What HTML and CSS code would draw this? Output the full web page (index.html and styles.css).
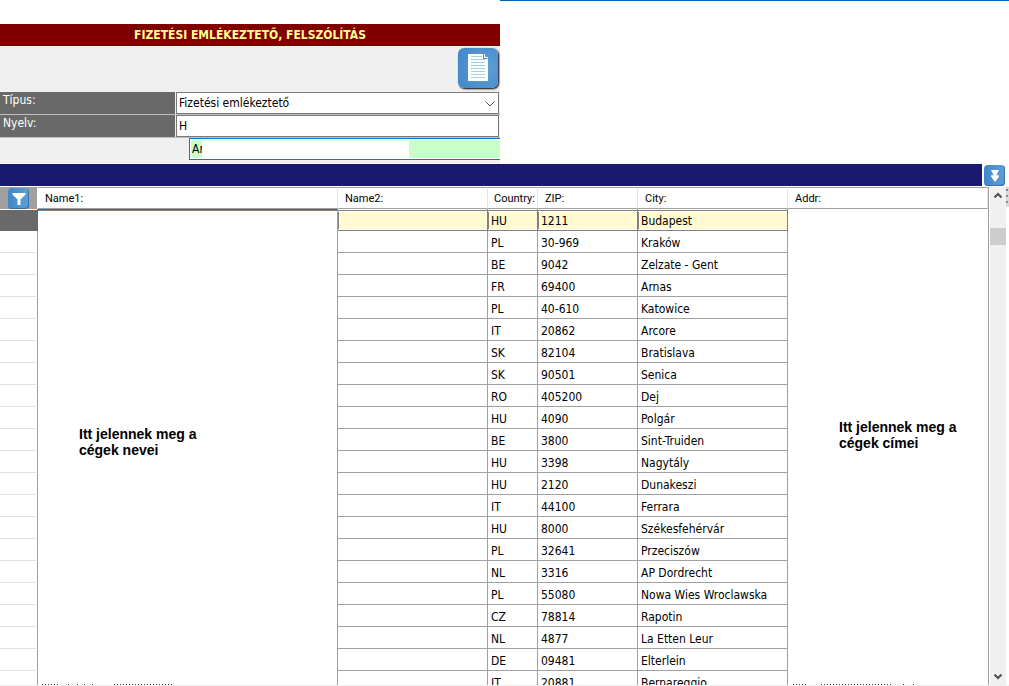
FILE: index.html
```html
<!DOCTYPE html>
<html lang="hu">
<head>
<meta charset="utf-8">
<title>Fizetési emlékeztető, felszólítás</title>
<link rel="stylesheet" href="styles.css">
</head>
<body>
<div class="top-area">
  <form class="panel">
    <h1 class="panel-title">FIZETÉSI EMLÉKEZTETŐ, FELSZÓLÍTÁS</h1>
    <div class="toolbar">
      <button class="doc-button" type="button" aria-label="Dokumentum">
        <svg width="20" height="28" viewBox="0 0 20 28"><path d="M0 0h15l5 5v22H0z" fill="#fbfdff"/><path d="M15 0v5h5z" fill="#3f86c6"/><path d="M16 0h1v3h3v1h-4z" fill="#fff"/><path d="M3 2.500h11M3 5.500h14M3 8.500h14M3 11.500h14M3 14.500h14M3 17.500h14M3 20.500h14M3 23.500h14" stroke="#a5cdec"/></svg>
      </button>
    </div>
    <div class="field">
      <label class="field-label" for="type">Típus:</label>
      <span class="field-box">
        <select class="control" id="type"><option>Fizetési emlékeztető</option></select>
        <svg class="chevron" width="10" height="6" viewBox="0 0 10 6"><path d="M.5.5 5 5 9.500.5" fill="none" stroke="#555"/></svg>
      </span>
    </div>
    <div class="field">
      <label class="field-label" for="lang">Nyelv:</label>
      <span class="field-box"><input class="control" id="lang" value="H"></span>
    </div>
    <div class="search">
      <input class="search-input" value="Ar" aria-label="Keresés">
      <span class="search-mask"></span>
    </div>
  </form>
  <div class="top-line"></div>
</div>
<div class="bar">
  <div class="bar-fill"></div>
  <button class="small-button" type="button" aria-label="Lenyitás">
    <svg width="10" height="14" viewBox="0 0 10 14"><path d="M1 1h8L6.500 6H9v1.500L5 13 1 7.500V6h2.500z" fill="#fff"/><path d="M1 6.500h2.500M6.500 6.500H9" stroke="#cfe2f4"/></svg>
  </button>
</div>
<main class="grid-area">
  <div class="table-wrap">
    <table class="grid">
      <colgroup><col class="c-mark"><col class="c-name1"><col class="c-name2"><col class="c-country"><col class="c-zip"><col class="c-city"><col></colgroup>
      <thead>
        <tr>
          <th class="corner"><button class="small-button" type="button" aria-label="Szűrő"><svg width="14" height="14" viewBox="0 0 14 14"><path d="M.5 1h13v1.500L8.500 7.500V13H5.500V7.500L.5 2.500z" fill="#fff"/></svg></button></th>
          <th>Name1:</th><th>Name2:</th><th>Country:</th><th>ZIP:</th><th>City:</th><th>Addr:</th>
        </tr>
      </thead>
      <tbody>
        <tr class="selected"><td class="mark"></td><td class="note note-name" rowspan="22"><p>Itt jelennek meg a<br>cégek nevei</p></td><td></td><td>HU</td><td>1211</td><td>Budapest</td><td class="note note-addr" rowspan="22"><p>Itt jelennek meg a<br>cégek címei</p></td></tr>
        <tr><td class="mark"></td><td></td><td>PL</td><td>30-969</td><td>Kraków</td></tr>
        <tr><td class="mark"></td><td></td><td>BE</td><td>9042</td><td>Zelzate - Gent</td></tr>
        <tr><td class="mark"></td><td></td><td>FR</td><td>69400</td><td>Arnas</td></tr>
        <tr><td class="mark"></td><td></td><td>PL</td><td>40-610</td><td>Katowice</td></tr>
        <tr><td class="mark"></td><td></td><td>IT</td><td>20862</td><td>Arcore</td></tr>
        <tr><td class="mark"></td><td></td><td>SK</td><td>82104</td><td>Bratislava</td></tr>
        <tr><td class="mark"></td><td></td><td>SK</td><td>90501</td><td>Senica</td></tr>
        <tr><td class="mark"></td><td></td><td>RO</td><td>405200</td><td>Dej</td></tr>
        <tr><td class="mark"></td><td></td><td>HU</td><td>4090</td><td>Polgár</td></tr>
        <tr><td class="mark"></td><td></td><td>BE</td><td>3800</td><td>Sint-Truiden</td></tr>
        <tr><td class="mark"></td><td></td><td>HU</td><td>3398</td><td>Nagytály</td></tr>
        <tr><td class="mark"></td><td></td><td>HU</td><td>2120</td><td>Dunakeszi</td></tr>
        <tr><td class="mark"></td><td></td><td>IT</td><td>44100</td><td>Ferrara</td></tr>
        <tr><td class="mark"></td><td></td><td>HU</td><td>8000</td><td>Székesfehérvár</td></tr>
        <tr><td class="mark"></td><td></td><td>PL</td><td>32641</td><td>Przeciszów</td></tr>
        <tr><td class="mark"></td><td></td><td>NL</td><td>3316</td><td>AP Dordrecht</td></tr>
        <tr><td class="mark"></td><td></td><td>PL</td><td>55080</td><td>Nowa Wies Wroclawska</td></tr>
        <tr><td class="mark"></td><td></td><td>CZ</td><td>78814</td><td>Rapotin</td></tr>
        <tr><td class="mark"></td><td></td><td>NL</td><td>4877</td><td>La Etten Leur</td></tr>
        <tr><td class="mark"></td><td></td><td>DE</td><td>09481</td><td>Elterlein</td></tr>
        <tr><td class="mark"></td><td></td><td>IT</td><td>20881</td><td>Bernareggio</td></tr>
      </tbody>
    </table>
    <svg class="clipped clipped-name" width="130" height="1"><path d="M0 .5h17M26 .5h2M35 .5h2M42 .5h2M50 .5h2M72 .5h58" stroke="#334" stroke-dasharray="1 2"/></svg>
    <svg class="clipped clipped-addr" width="124" height="1"><path d="M0 .5h15M28 .5h72M110 .5h2M120 .5h2" stroke="#334" stroke-dasharray="1 2"/></svg>
  </div>
  <div class="scrollbar">
    <button class="scroll-button" type="button" aria-label="Fel"><svg width="8" height="7" viewBox="0 0 8 7"><path d="M.5 5.500 4 2l3.500 3.500" fill="none" stroke="#505050" stroke-width="2"/></svg></button>
    <div class="scroll-track"><div class="scroll-thumb"></div></div>
    <button class="scroll-button" type="button" aria-label="Le"><svg width="8" height="7" viewBox="0 0 8 7"><path d="M.5 1.500 4 5l3.500-3.500" fill="none" stroke="#505050" stroke-width="2"/></svg></button>
  </div>
  <div class="splitter"></div>
</main>
</body>
</html>
```
FILE: styles.css
```css
* { box-sizing: border-box; }

body {
  margin: 0;
  height: 100vh;
  overflow: hidden;
  display: flex;
  flex-direction: column;
  background: #fff;
  color: #000;
  font: 12px/16px "DejaVu Sans Condensed", "DejaVu Sans", sans-serif;
}

button { padding: 0; border: 0; }
svg { display: block; }

.top-area { display: flex; }
.top-line { flex: 1; height: 1px; background: #0063b1; }

.panel {
  width: 500px;
  margin-top: 24px;
  padding-bottom: 3px;
  background: #f0f0f0;
  border-bottom: 1px solid #f8f8f8;
}

.panel-title {
  margin: 0;
  background: #800000;
  color: #ffff90;
  font-size: 12px;
  line-height: 22px;
  text-align: center;
}

.toolbar {
  display: flex;
  justify-content: flex-end;
  height: 46px;
  padding: 2px 2px 0 0;
}

.doc-button {
  display: grid;
  place-items: center;
  width: 40px;
  height: 40px;
  border-radius: 6px;
  background: radial-gradient(circle at 70% 50%, #609fd8, #3f87c6);
  box-shadow: 1px 1px 2px #000;
}

.field {
  display: flex;
  gap: 1px;
  height: 23px;
  padding-right: 1px;
  border-bottom: 1px solid #c0c0c0;
}

.field-label {
  width: 175px;
  padding-left: 3px;
  background: #696969;
  color: #fff;
}

.field-box { position: relative; flex: 1; display: flex; }

.control {
  width: 100%;
  padding: 0 2px;
  border: 1px solid #7a7a7a;
  border-radius: 0;
  background: #fff;
  color: #000;
  font: inherit;
  appearance: none;
}

.chevron { position: absolute; right: 4px; top: 9px; }

.search { position: relative; margin-left: 189px; }

.search-input {
  display: block;
  width: 100%;
  height: 22px;
  padding: 0 2px;
  border: 1px solid #0078d7;
  border-right: 0;
  border-radius: 0;
  background: #c8ffc8;
  box-shadow: inset 1px 1px #fff, inset 0 -1px #fff;
  font: inherit;
}

.search-mask {
  position: absolute;
  left: 13px;
  top: 3px;
  width: 207px;
  height: 18px;
  background: #fff;
}

.bar {
  display: flex;
  gap: 2px;
  height: 23px;
  padding-right: 4px;
}

.bar-fill { flex: 1; height: 22px; background: #191970; }

.small-button {
  display: grid;
  place-items: center;
  width: 21px;
  height: 21px;
  border-radius: 4px;
  background: linear-gradient(90deg, #3f87c6, #609fd8);
  box-shadow: inset -1px -1px #3c6f9e;
}

.bar .small-button { margin-top: 1px; }

.grid-area {
  flex: 1;
  min-height: 0;
  display: flex;
  border-bottom: 1px solid #f0f0f0;
}

.table-wrap {
  position: relative;
  flex: 1;
  overflow: hidden;
  border-right: 1px solid #a0a0a0;
}

.grid {
  width: 100%;
  table-layout: fixed;
  border-collapse: separate;
  border-spacing: 0;
}

.c-mark { width: 38px; }
.c-name1 { width: 300px; }
.c-name2 { width: 150px; }
.c-country { width: 50px; }
.c-zip { width: 100px; }
.c-city { width: 150px; }

.grid th {
  height: 22px;
  padding: 2px 0 0 7px;
  border-top: 1px solid #a0a0a0;
  border-right: 1px solid #e5e5e5;
  border-bottom: 1px solid #a0a0a0;
  font-family: Roboto, sans-serif;
  font-size: 11px;
  font-weight: 400;
  text-align: left;
  white-space: nowrap;
}

.grid th:nth-child(4) { padding-left: 6px; }
.grid th.corner { padding: 0 0 0 8px; border-right-color: #fff; border-bottom: 0; background: #a0a0a0; }

.grid td {
  height: 22px;
  padding: 2px 3px 0;
  border-right: 1px solid #a0a0a0;
  border-bottom: 1px solid #a0a0a0;
  white-space: nowrap;
}

.grid td.mark { border-bottom-color: #e3e3e3; }

.selected td {
  border-color: #808080;
  background: #fffad2;
  box-shadow: inset 0 1px #fff, inset 0 2px #808080, inset 0 3px #fff, inset 0 -1px #fff, inset 1px 0 #808080, inset 2px 0 #fff;
}

.grid .selected .mark { background: #696969; border-color: #696969; box-shadow: inset 0 1px #fff; }

.grid td.note {
  border-color: #a0a0a0;
  background: #fff;
  box-shadow: none;
  vertical-align: top;
  font: bold 14px/16px "Liberation Sans", Arial, sans-serif;
}

.grid td.note-name { padding: 216px 0 0 41px; border-top: 1px solid #0078d7; box-shadow: inset 0 1px #808080; }
.grid td.note-addr { padding: 210px 0 0 51px; border-right: 0; }
.note p { margin: 0; }

.clipped { position: absolute; bottom: 0; }
.clipped-name { left: 42px; }
.clipped-addr { left: 793px; }

.scrollbar {
  display: flex;
  flex-direction: column;
  width: 17px;
  border-left: 1px solid #fff;
  background: #f0f0f0;
}

.scroll-button { display: grid; place-items: center; height: 17px; background: #f0f0f0; }
.scroll-track { flex: 1; padding-top: 24px; }
.scroll-thumb { height: 17px; background: #cdcdcd; }

.splitter {
  width: 3px;
  height: 20px;
  background: radial-gradient(circle at 1px 3px, #888 1px, #dadada 1px) 0 0 / 3px 6px;
}
```
